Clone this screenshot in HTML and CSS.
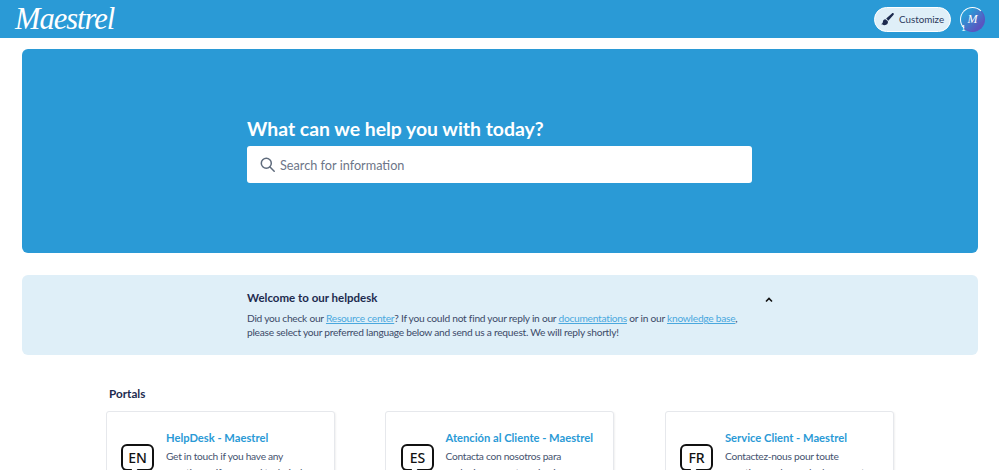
FILE: index.html
```html
<!DOCTYPE html>
<html lang="en">
<head>
    <meta charset="UTF-8">
    <title>Helpdesk - Maestrel</title>
    <link rel="stylesheet" href="styles.css">
</head>
<body>

    <header class="topbar">
        <a class="logo">Maestrel</a>
        <div class="topbar-right">
            <button class="customize">
                <svg width="13" height="13" viewBox="0 0 13 13"><path d="M12.6.4c-.5-.5-1.2-.4-1.7 0L5.2 5.6l2.1 2.1 5.1-5.600c.5-.5.7-1.200.2-1.700zM4.400 6.300C2.800 6.300 2 7.400 1.900 8.800 1.800 10 1.200 10.700.2 11c1.400 1.400 3.700 1.500 5.300.6 1.300-.8 1.700-2.200 1.200-3.500z" fill="#1d2b4f"/></svg>
                Customize
            </button>
            <div class="avatar">
                <span class="avatar-inner">M</span>
                <span class="avatar-count">1</span>
            </div>
        </div>
    </header>

    <section class="hero">
        <div class="hero-inner">
            <h1>What can we help you with today?</h1>
            <div class="search">
                <svg width="15" height="15" viewBox="0 0 15 15"><circle cx="6.300" cy="6.300" r="5" fill="none" stroke="#5f6b7c" stroke-width="1.500"/><path d="M10 10l4.200 4.200" stroke="#5f6b7c" stroke-width="1.500" stroke-linecap="round"/></svg>
                <span>Search for information</span>
            </div>
        </div>
    </section>

    <section class="welcome">
        <div class="welcome-inner">
            <div class="welcome-head">
                <h2>Welcome to our helpdesk</h2>
                <svg class="chevron" width="8" height="6" viewBox="0 0 8 6"><path d="M1 4.500l3-3 3 3" fill="none" stroke="#111" stroke-width="1.600"/></svg>
            </div>
            <p>Did you check our <a>Resource center</a>? If you could not find your reply in our <a>documentations</a> or in our <a>knowledge base</a>,<br>please select your preferred language below and send us a request. We will reply shortly!</p>
        </div>
    </section>

    <section class="portals">
        <h3>Portals</h3>
        <div class="portal-grid">
            <div class="card">
                <svg class="bubble" width="34" height="34" viewBox="0 0 34 34"><path d="M6 1h21a5 5 0 0 1 5 5v15a5 5 0 0 1-5 5H17l-4 4.500-3-4.500H6a5 5 0 0 1-5-5V6a5 5 0 0 1 5-5z" fill="none" stroke="#111" stroke-width="2"/><text x="16.500" y="19" text-anchor="middle">EN</text></svg>
                <div>
                    <h4>HelpDesk - Maestrel</h4>
                    <p>Get in touch if you have any<br>question or if you need technical</p>
                </div>
            </div>
            <div class="card">
                <svg class="bubble" width="34" height="34" viewBox="0 0 34 34"><path d="M6 1h21a5 5 0 0 1 5 5v15a5 5 0 0 1-5 5H17l-4 4.500-3-4.500H6a5 5 0 0 1-5-5V6a5 5 0 0 1 5-5z" fill="none" stroke="#111" stroke-width="2"/><text x="16.500" y="19" text-anchor="middle">ES</text></svg>
                <div>
                    <h4>Atención al Cliente - Maestrel</h4>
                    <p>Contacta con nosotros para<br>cualquier pregunta o si quieres</p>
                </div>
            </div>
            <div class="card">
                <svg class="bubble" width="34" height="34" viewBox="0 0 34 34"><path d="M6 1h21a5 5 0 0 1 5 5v15a5 5 0 0 1-5 5H17l-4 4.500-3-4.500H6a5 5 0 0 1-5-5V6a5 5 0 0 1 5-5z" fill="none" stroke="#111" stroke-width="2"/><text x="16.500" y="19" text-anchor="middle">FR</text></svg>
                <div>
                    <h4>Service Client - Maestrel</h4>
                    <p>Contactez-nous pour toute<br>question ou demande de support</p>
                </div>
            </div>
        </div>
    </section>

</body>
</html>
```

FILE: styles.css
```css
html {
    overflow: hidden;
}

body {
    font-family: Lato, "Noto Sans", sans-serif;
    margin: 0;
    background: #fff;
    color: #1d2b4f;
    height: 470px;
    overflow: hidden;
}

.topbar {
    height: 38px;
    background-color: #2a9ad6;
    display: flex;
    align-items: center;
    justify-content: space-between;
    padding: 0 14px 0 15px;
}

.logo {
    font-family: "Liberation Serif", serif;
    font-style: italic;
    font-size: 30.500px;
    line-height: 38px;
    color: #fff;
    letter-spacing: -1px;
}

.topbar-right {
    display: flex;
    align-items: center;
    gap: 9px;
}

.customize {
    display: flex;
    align-items: center;
    gap: 5px;
    box-sizing: border-box;
    height: 25px;
    width: 77px;
    padding: 0 0 0 6px;
    font-family: inherit;
    font-size: 9.800px;
    color: #2c3a5c;
    background-color: #dfeff8;
    border: 1.500px solid #fff;
    border-radius: 13px;
}

.avatar {
    position: relative;
    box-sizing: border-box;
    width: 25px;
    height: 25px;
    border-radius: 50%;
    background: linear-gradient(135deg, #2a9ad6 25%, #5a55c0 80%);
    border: 1.500px solid;
    border-color: #fff #5a55c0 #5a55c0 #fff;
    display: flex;
    align-items: center;
    justify-content: center;
}

.avatar-inner {
    font-family: "Liberation Serif", serif;
    font-style: italic;
    font-size: 12px;
    color: #fff;
}

.avatar-count {
    position: absolute;
    left: 0;
    bottom: -2px;
    font-size: 8px;
    line-height: 9px;
    color: #fff;
}

.hero {
    margin: 11px 21px 0 22px;
    height: 204px;
    background-color: #2a9ad6;
    border-radius: 6px;
    display: flex;
    justify-content: center;
    padding: 69px 1px 0 0;
    box-sizing: border-box;
}

.hero-inner {
    width: 505px;
}

.hero h1 {
    margin: 0 0 6px;
    font-size: 19.400px;
    font-weight: 700;
    line-height: 22px;
    color: #fff;
}

.search {
    height: 37px;
    background: #fff;
    border-radius: 3px;
    display: flex;
    align-items: center;
    gap: 5px;
    padding-left: 13px;
    font-size: 12.700px;
    color: #6d7688;
}

.welcome {
    margin: 22px 21px 0 22px;
    height: 80px;
    background-color: #dfeff8;
    border-radius: 6px;
    padding: 15px 0 0 225px;
    box-sizing: border-box;
}

.welcome-inner {
    width: 526px;
    font-size: 10.200px;
    letter-spacing: -0.250px;
    color: #3c4a68;
}

.welcome-head {
    display: flex;
    justify-content: space-between;
    align-items: center;
    height: 14px;
    margin-bottom: 7px;
}

.chevron {
    margin-top: 5px;
}

.welcome h2 {
    margin: 0;
    font-size: 11.500px;
    letter-spacing: 0;
    font-weight: 700;
    color: #1d2b4f;
}

.welcome p {
    margin: 0;
    line-height: 14px;
    white-space: nowrap;
}

.welcome a {
    color: #4aa8de;
    text-decoration: underline;
}

.portals {
    margin: 31px 105px 0 105.500px;
}

.portals h3 {
    margin: 0 0 10px 3.500px;
    font-size: 11.700px;
    font-weight: 700;
    line-height: 15px;
}

.portal-grid {
    display: grid;
    grid-template-columns: repeat(3, 229px);
    gap: 50.500px;
}

.card {
    display: flex;
    align-items: flex-start;
    gap: 11px;
    height: 160px;
    padding: 19px 16px 0 14.500px;
    box-sizing: border-box;
    background: #fff;
    border: 1px solid #e6e8ec;
    border-radius: 3px;
    box-shadow: 1px 1px 2px rgba(0, 0, 0, 0.06);
}

.bubble {
    flex: none;
    margin-top: 13px;
}

.bubble text {
    font-family: "Noto Sans", sans-serif;
    font-size: 14px;
    font-weight: 500;
    fill: #111;
}

.card h4 {
    margin: 0 0 3px;
    font-size: 11.200px;
    font-weight: 700;
    line-height: 14px;
    color: #2a9ad6;
    white-space: nowrap;
}

.card p {
    margin: 0;
    font-size: 10.200px;
    letter-spacing: -0.280px;
    line-height: 16px;
    color: #46536f;
}
```
